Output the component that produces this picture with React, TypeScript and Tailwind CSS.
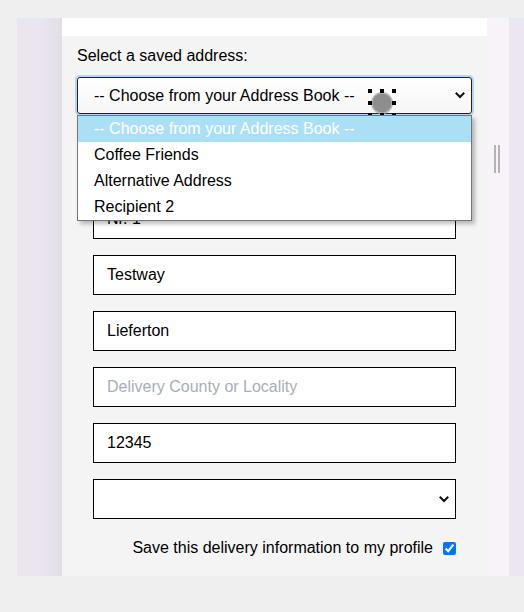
import React from 'react'

const font = { fontFamily: '"Liberation Sans", Arial, sans-serif' }

function Chevron() {
  return (
    <svg width="10" height="7" viewBox="0 0 10 7" className="shrink-0">
      <path d="M1.5 1.5 L5 5 L8.5 1.5" fill="none" stroke="#111" strokeWidth="2" strokeLinecap="square" />
    </svg>
  )
}

function TouchCursor() {
  const dots = [
    [2, 2], [14, 2], [26, 2],
    [2, 14], [26, 14],
    [2, 26], [14, 26], [26, 26],
  ]
  return (
    <svg width="28" height="28" viewBox="0 0 28 28" className="pointer-events-none absolute left-[291px] top-[12px]">
      <circle cx="14" cy="14" r="11" fill="#b8b8b8" />
      <circle cx="14" cy="14" r="9.5" fill="#8e8e8e" />
      {dots.map(([x, y], i) => (
        <rect key={i} x={x - 2} y={y - 2} width="4" height="4" fill="#000" />
      ))}
    </svg>
  )
}

function TextField({ value, placeholder }: { value?: string; placeholder?: string }) {
  return (
    <div className="flex h-[40px] w-[363px] items-center border border-black bg-white px-[13px] text-[16px]">
      {value ? (
        <span className="text-black">{value}</span>
      ) : placeholder ? (
        <span className="text-[#a7aeb8]">{placeholder}</span>
      ) : null}
    </div>
  )
}

const options = ['-- Choose from your Address Book --', 'Coffee Friends', 'Alternative Address', 'Recipient 2']

export default function App() {
  return (
    <div className="h-[612px] w-[524px] bg-[#efefef] pl-[17px] pt-[18px]" style={font}>
      <div className="flex h-[558px]">
        {/* left rail */}
        <div className="w-[45px] bg-gradient-to-r from-[#ebe5f0] via-[#eae5ef] to-[#e2dee6]" />

        {/* main panel */}
        <div className="flex w-[425px] flex-col bg-[#f4f4f4]">
          <div className="h-[18px] bg-white" />
          <div className="flex flex-col pl-[15px] pt-[11px]">
            <div className="h-[18px] text-[16px] leading-[18px] text-black">Select a saved address:</div>

            <div className="relative mt-[12px] w-[395px]">
              <div className="flex h-[37px] items-center justify-between rounded-[3px] border border-[#222] bg-gradient-to-b from-white to-[#f6f6f6] pl-[16px] pr-[6px] text-[16px] text-black shadow-[0_0_0_2px_#b7d3f6]">
                <span>-- Choose from your Address Book --</span>
                <Chevron />
              </div>
              <TouchCursor />

              {/* open option list */}
              <div className="absolute left-0 top-[38px] z-10 w-[395px] border border-[#767676] bg-white shadow-[3px_3px_4px_rgba(0,0,0,0.25)]">
                {options.map((o, i) => (
                  <div
                    key={o}
                    className={
                      i === 0
                        ? 'flex h-[26px] items-center bg-[#abdff5] pl-[16px] text-[16px] text-white'
                        : 'flex h-[26px] items-center pl-[16px] text-[16px] text-black'
                    }
                  >
                    {o}
                  </div>
                ))}
              </div>
            </div>

            <div className="ml-[16px] mt-[29px] flex flex-col gap-[16px]">
              <TextField />
              <TextField value="Nr. 1" />
              <TextField value="Testway" />
              <TextField value="Lieferton" />
              <TextField placeholder="Delivery County or Locality" />
              <TextField value="12345" />
              <div className="flex h-[40px] w-[363px] items-center justify-end border border-black bg-white pr-[6px]">
                <Chevron />
              </div>
              <label className="mt-[4px] flex h-[18px] w-[363px] items-center justify-end gap-[10px] text-[16px] leading-[18px] text-black">
                <span>Save this delivery information to my profile</span>
                <input type="checkbox" defaultChecked className="m-0 h-[13px] w-[13px]" />
              </label>
            </div>
          </div>
        </div>

        {/* right rails */}
        <div className="flex w-[22px] flex-col bg-[#f7f3f9] pl-[7px] pt-[127px]">
          <div className="flex h-[28px] gap-[2px]">
            <div className="w-[2px] bg-[#b3b3b3]" />
            <div className="w-[2px] bg-[#b3b3b3]" />
          </div>
        </div>
        <div className="w-[15px] bg-[#ece6f1]" />
      </div>
    </div>
  )
}
